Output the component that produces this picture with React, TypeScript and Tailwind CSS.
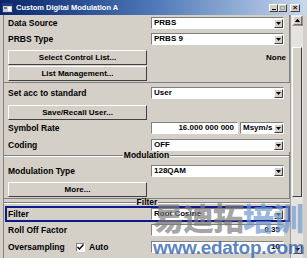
import React from 'react';

const sunken = 'border border-t-[#808080] border-l-[#808080] border-b-white border-r-white';
const raised = 'border border-t-white border-l-white border-b-[#404040] border-r-[#404040]';

function Arrow({ up = false }: { up?: boolean }) {
  return (
    <div className={`w-[9px] h-[9px] bg-[#d4d0c8] ${raised} flex items-center justify-center shrink-0`}>
      <svg width="5" height="3" viewBox="0 0 5 3">
        <path d={up ? 'M0 3h5L2.5 0z' : 'M0 0h5L2.5 3z'} fill="#000" />
      </svg>
    </div>
  );
}

function Combo({ value, className = 'w-[133px]' }: { value: string; className?: string }) {
  return (
    <div className={`h-[12px] bg-white ${sunken} flex items-center ${className}`}>
      <span className="flex-1 pl-[2px] text-[8px] font-bold leading-none truncate">{value}</span>
      <Arrow />
    </div>
  );
}

function Field({ value, className = 'w-[133px]' }: { value: string; className?: string }) {
  return (
    <div className={`h-[12px] bg-white ${sunken} flex items-center justify-end pr-[3px] ${className}`}>
      <span className="text-[8px] font-bold leading-none">{value}</span>
    </div>
  );
}

function Button({ label }: { label: string }) {
  return (
    <div className={`ml-[4px] w-[139px] h-[15px] bg-[#d4d0c8] ${raised} flex items-center justify-center text-[8px] font-bold`}>
      {label}
    </div>
  );
}

function Row({ label, children, h = 'h-[14px]', mt = '' }: { label: string; children?: React.ReactNode; h?: string; mt?: string }) {
  return (
    <div className={`flex items-center ${h} ${mt}`}>
      <span className="w-[147px] pl-[4px] text-[8.5px] font-bold leading-none">{label}</span>
      {children}
    </div>
  );
}

function Header({ label }: { label: string }) {
  return (
    <div className="flex items-center h-[7px]">
      <div className="flex-1 border-t border-t-[#808080] border-b border-b-white" />
      <span className="px-[1px] text-[8.5px] font-bold leading-none">{label}</span>
      <div className="flex-1 border-t border-t-[#808080] border-b border-b-white" />
    </div>
  );
}

function Scrollbar() {
  return (
    <div className="w-[13px] flex flex-col bg-[#e6e3de] border-l border-[#a0a0a0] pt-[1px]">
      <div className="flex justify-center"><div className="scale-110"><Arrow up /></div></div>
      <div className="h-[22px]" />
      <div className={`mx-[1px] h-[150px] bg-[#d4d0c8] ${raised}`} />
      <div className="flex-1" />
      <div className="flex justify-center pb-[4px]"><Arrow /></div>
    </div>
  );
}

export default function App() {
  return (
    <div className="relative w-[307px] h-[258px] overflow-hidden bg-[#d4d0c8] flex flex-col text-black font-['Liberation_Sans',Arial,sans-serif]">
      {/* title bar */}
      <div className="h-[15px] flex items-center bg-gradient-to-r from-[#0a246a] via-[#4f78b8] to-[#c8d8ec] px-[2px]">
        <svg width="11" height="10" viewBox="0 0 11 10" className="mr-[3px]">
          <rect x="0.5" y="0.5" width="10" height="9" fill="#d4d0c8" stroke="#1c3c80" />
          <rect x="1" y="1" width="9" height="2" fill="#1c3c80" />
          <rect x="2" y="4" width="3" height="2" fill="#5a7fb8" />
          <rect x="6" y="4" width="3" height="4" fill="#fff" />
        </svg>
        <span className="text-white text-[7.5px] font-bold leading-none">Custom Digital Modulation A</span>
        <div className="ml-auto flex items-center mr-[5px]">
          <div className={`w-[9px] h-[8px] bg-[#d4d0c8] ${raised} flex items-end justify-center pb-[1px]`}>
            <div className="w-[4px] h-[1px] bg-black" />
          </div>
          <div className={`w-[9px] h-[8px] bg-[#d4d0c8] ${raised} flex items-center justify-center`}>
            <div className="w-[5px] h-[4px] border border-[#a0a0a0]" />
          </div>
          <div className={`ml-[3px] w-[10px] h-[8px] bg-[#d4d0c8] ${raised} flex items-center justify-center text-[8px] font-bold leading-none`}>
            ×
          </div>
        </div>
      </div>

      <div className="flex-1 flex">
        {/* main panel */}
        <div className="ml-[3px] w-[287px] border-l border-[#808080] flex flex-col">
          <div className="pt-[1px] pb-[1px] border-b border-r border-[#808080]">
            <Row label="Data Source"><Combo value="PRBS" /></Row>
            <Row label="PRBS Type" mt="mt-[2px]"><Combo value="PRBS 9" /></Row>
            <div className="mt-[4px] flex items-center">
              <Button label="Select Control List..." />
              <span className="ml-auto pr-[3px] text-[8px] font-bold">None</span>
            </div>
            <div className="mt-[1px]"><Button label="List Management..." /></div>
          </div>

          <Row label="Set acc to standard" h="h-[16px]" mt="mt-[2px]"><Combo value="User" /></Row>
          <div className="mt-[4px]"><Button label="Save/Recall User..." /></div>
          <Row label="Symbol Rate" mt="mt-[1px]">
            <Field value="16.000 000 000" className="w-[87px]" />
            <Combo value="Msym/s" className="ml-[2px] w-[44px]" />
          </Row>
          <Row label="Coding" mt="mt-[3px]"><Combo value="OFF" /></Row>

          <div className="border-r border-b border-[#808080] pb-[1px]">
            <Header label="Modulation" />
            <Row label="Modulation Type" mt="mt-[5px]"><Combo value="128QAM" /></Row>
            <div className="mt-[4px]"><Button label="More..." /></div>
          </div>

          <Header label="Filter" />
          <div className="ml-[1px] h-[16px] border-2 border-[#0c1a8a] flex items-center">
            <span className="w-[144px] pl-[1px] text-[8.5px] font-bold leading-none">Filter</span>
            <Combo value="Root Cosine" />
          </div>
          <Row label="Roll Off Factor" mt="mt-[1px]"><Field value="0.35" /></Row>
          <div className="mt-[3px] flex items-center h-[14px]">
            <span className="w-[72px] pl-[4px] text-[8.5px] font-bold leading-none">Oversampling</span>
            <div className={`w-[9px] h-[9px] bg-white ${sunken} flex items-center justify-center`}>
              <svg width="7" height="6" viewBox="0 0 7 6">
                <path d="M0.5 3l2 2L6.5 0.5" stroke="#000" strokeWidth="1.4" fill="none" />
              </svg>
            </div>
            <span className="ml-[4px] w-[62px] text-[8.5px] font-bold leading-none">Auto</span>
            <Field value="10" />
          </div>
        </div>

        <Scrollbar />
        <div className="w-[4px]" />
      </div>

      {/* watermark */}
      <div className="absolute left-[153px] top-[201px] flex flex-col leading-none pointer-events-none">
        <div className="flex text-[31px] font-black font-['Noto_Sans_CJK_SC',sans-serif] leading-none tracking-[-1px]">
          <span className="text-[#7d7d7d]/70">易迪拓</span>
          <span className="text-[#6f97cf]/70">培训</span>
        </div>
        <span className="mt-[6px] text-[19px] font-bold text-[#2f62b0]/80 tracking-[-0.3px] font-['Liberation_Sans',Arial,sans-serif]">www.edatop.com</span>
      </div>
    </div>
  );
}
